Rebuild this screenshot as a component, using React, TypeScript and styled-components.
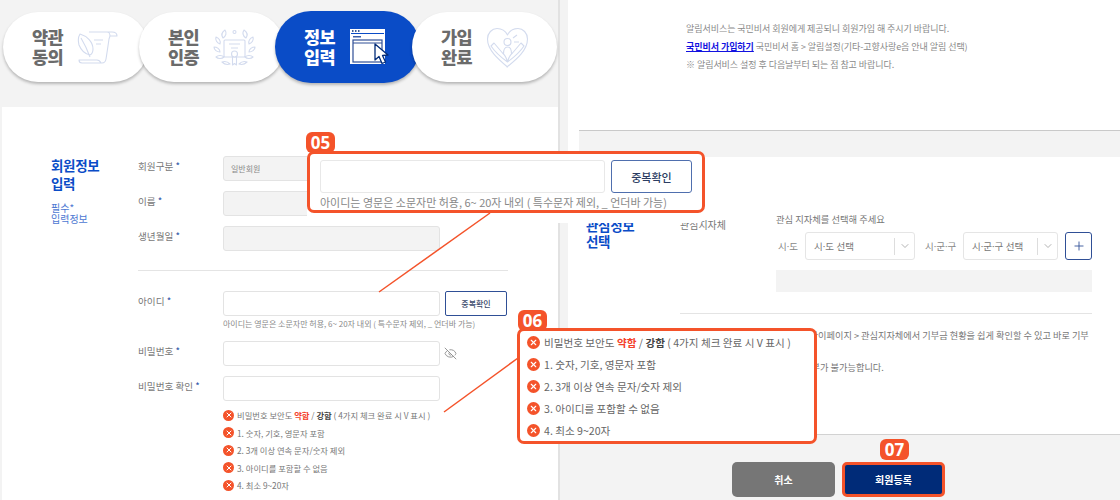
import styled, { createGlobalStyle } from "styled-components";
import { ChevronDown, EyeOff, Plus, X } from "lucide-react";

const GlobalStyle = createGlobalStyle`
  html, body {
    margin: 0;
    padding: 0;
    background: #f3f3f3;
  }
  * {
    box-sizing: border-box;
  }
  body {
    font-family: "Noto Sans CJK KR", "Noto Sans", sans-serif;
    color: #666;
  }
`;

const orange = "#f4532a";
const blue = "#0a4cc7";
const navy = "#002b78";
const iconLine = "#d3dbee";

const Page = styled.div`
  position: relative;
  display: flex;
  width: 1120px;
  height: 500px;
  overflow: hidden;
  background: #f3f3f3;
`;

const LeftShot = styled.section`
  width: 560px;
  height: 500px;
  flex: none;
  border-right: 2px solid #e2e2e2;
  padding: 12px 0 0 3px;
`;

const RightShot = styled.section`
  flex: 1;
  height: 500px;
  padding-left: 8px;
  display: flex;
  flex-direction: column;
`;

const Sheet = styled.div`
  display: flex;
  flex-direction: column;
  height: 435px;
  flex: none;
  background: #fff;
`;

const Steps = styled.div`
  display: flex;
  height: 70px;
  align-items: center;
`;

const Step = styled.div<{ $active?: boolean }>`
  display: flex;
  align-items: center;
  gap: 9px;
  flex: none;
  width: 145px;
  height: ${(p) => (p.$active ? "72px" : "70px")};
  margin-right: -9px;
  padding-left: 29px;
  border-radius: 36px;
  background: ${(p) => (p.$active ? blue : "#fff")};
  box-shadow: 0 2px 3px rgba(0, 0, 0, 0.25);
  color: ${(p) => (p.$active ? "#fff" : "#6b6b6b")};
  z-index: ${(p) => (p.$active ? 2 : 1)};

  &:last-child {
    z-index: 3;
    margin-left: 1px;
    margin-right: 0;
  }
`;

const StepText = styled.div`
  font-size: 17.5px;
  font-weight: 900;
  line-height: 20px;
  letter-spacing: -0.5px;
  width: 36px;
  flex: none;
`;

const FormPanel = styled.div`
  display: flex;
  height: 393px;
  margin: 25px 0 0 -1px;
  padding: 49px 0 0 49px;
  background: #fff;
`;

const SideTitle = styled.div`
  width: 87px;
  flex: none;
`;

const Heading = styled.h2`
  margin: 0;
  color: ${blue};
  font-size: 13.5px;
  font-weight: 700;
  line-height: 18px;
  letter-spacing: -0.3px;
`;

const SubHeading = styled.p`
  margin: 10px 0 0;
  color: #4d78d2;
  font-size: 10px;
  line-height: 11px;
`;

const FormBody = styled.div`
  width: 370px;
  display: flex;
  flex-direction: column;
`;

const Row = styled.div<{ $gap?: number }>`
  display: flex;
  margin-bottom: ${(p) => p.$gap ?? 10}px;
`;

const Label = styled.label`
  width: 85px;
  flex: none;
  padding-top: 2px;
  font-size: 9.6px;
  line-height: 16px;
  color: #777;

  b {
    color: #2f55a8;
    font-weight: 400;
  }
`;

const Input = styled.div<{ $disabled?: boolean }>`
  width: 217px;
  height: 25px;
  flex: none;
  padding-left: 7px;
  border: 1px solid #e3e3e3;
  border-radius: 3px;
  background: ${(p) => (p.$disabled ? "#f3f3f3" : "#fff")};
  font-size: 8px;
  line-height: 23px;
  color: #888;
`;

const SmallButton = styled.button`
  width: 62px;
  height: 25px;
  margin-left: 5px;
  padding: 0;
  border: 1px solid #2f4f96;
  border-radius: 2px;
  background: #fff;
  color: #3a4a6b;
  font-family: inherit;
  font-size: 8px;
  font-weight: 500;
`;

const Divider = styled.hr`
  width: 100%;
  height: 1px;
  margin: 9px 0 20px;
  border: 0;
  background: #e4e4e4;
`;

const Hint = styled.div`
  margin: -8px 0 11px 85px;
  font-size: 8px;
  line-height: 12px;
  color: #8a8a8a;
  white-space: nowrap;
`;

const EyeWrap = styled.span`
  display: flex;
  align-items: center;
  margin-left: 4px;
  color: #888;
`;

const CheckList = styled.ul`
  list-style: none;
  margin: 8px 0 0 85px;
  padding: 0;
  display: flex;
  flex-direction: column;
  gap: 5.5px;
`;

const CheckItem = styled.li`
  display: flex;
  align-items: center;
  gap: 3px;
  height: 12px;
  font-size: 8.3px;
  color: #777;
  white-space: nowrap;
`;

const FailDot = styled.span<{ $size: number }>`
  display: inline-flex;
  align-items: center;
  justify-content: center;
  width: ${(p) => p.$size}px;
  height: ${(p) => p.$size}px;
  flex: none;
  border-radius: 50%;
  background: ${orange};
  color: #fff;
`;

const Weak = styled.b`
  color: #f4402a;
  font-weight: 700;
`;

const Strong = styled.b`
  color: #444;
  font-weight: 700;
`;

const NoticePanel = styled.div`
  height: 131px;
  flex: none;
  margin-left: 11px;
  padding: 20px 0 0 107px;
  border-bottom: 1px solid #c9c9c9;
  font-size: 9px;
  line-height: 18px;
  letter-spacing: -0.05px;
  color: #8a8a8a;
  white-space: nowrap;
`;

const GrayBand = styled.div`
  height: 26px;
  flex: none;
  margin-left: 11px;
  background: #f3f3f3;
`;

const JoinLink = styled.a`
  color: #1212e0;
  font-weight: 700;
  text-decoration: underline;
`;

const RegionPanel = styled.div`
  display: flex;
  flex: 1;
  margin-left: 11px;
  padding: 60px 28px 0 7px;
  border-bottom: 1px solid #d2d2d2;
`;

const RegionTitle = styled(Heading)`
  width: 94px;
  flex: none;
  line-height: 16px;
`;

const RegionBody = styled.div`
  flex: 1;
  min-width: 0;
`;

const RegionTop = styled.div`
  display: flex;
  padding-bottom: 21px;
  border-bottom: 1px solid #e4e4e4;
`;

const RegionLabel = styled.div`
  width: 96px;
  flex: none;
  padding-top: 1px;
  font-size: 10px;
  line-height: 14px;
  color: #777;
`;

const RegionFields = styled.div`
  width: 316px;
  margin-top: -4px;
`;

const RegionHelp = styled.div`
  font-size: 9.3px;
  line-height: 12px;
  color: #777;
`;

const SelectRow = styled.div`
  display: flex;
  align-items: center;
  margin-top: 7px;
  font-family: "Noto Sans", "Noto Sans CJK KR", sans-serif;
  font-size: 9.5px;
  color: #888;
`;

const SelectCaption = styled.span<{ $width: number }>`
  width: ${(p) => p.$width}px;
  flex: none;
  padding-left: 2px;
`;

const SelectBox = styled.div<{ $width: number }>`
  display: flex;
  align-items: center;
  width: ${(p) => p.$width}px;
  height: 28px;
  flex: none;
  padding-left: 8px;
  margin-right: 8px;
  border: 1px solid #e5e5e5;
  border-radius: 3px;
  background: #fff;
  color: #777;
`;

const SelectValue = styled.span`
  flex: 1;
`;

const SelectArrow = styled.span`
  display: flex;
  align-items: center;
  justify-content: center;
  width: 20px;
  height: 17px;
  border-left: 1px solid #ddd;
  color: #999;
`;

const PlusButton = styled.div`
  display: flex;
  align-items: center;
  justify-content: center;
  width: 27px;
  height: 28px;
  margin-left: -1px;
  border: 1px solid #2f4f96;
  border-radius: 3px;
  color: #2f4f96;
`;

const EmptyBar = styled.div`
  height: 22px;
  margin-top: 10px;
  background: #f3f3f3;
`;

const RegionNote = styled.p`
  margin: 5px 0 0;
  padding-left: 3px;
  font-size: 9.2px;
  line-height: 32px;
  color: #777;
  white-space: nowrap;
`;

const Buttons = styled.div`
  display: flex;
  gap: 7px;
  margin: 27px 0 0 164px;
`;

const ActionButton = styled.button<{ $primary?: boolean }>`
  width: 103px;
  height: 35px;
  padding: 0;
  border: ${(p) => (p.$primary ? `3px solid ${orange}` : "0")};
  border-radius: 5px;
  background: ${(p) => (p.$primary ? navy : "#767676")};
  color: #fff;
  font-family: inherit;
  font-size: 10px;
  font-weight: 700;
`;

/* callouts lie over the two screens */
const Callout = styled.div<{ $x: number; $y: number; $w: number; $h: number; $mask?: boolean }>`
  position: absolute;
  left: ${(p) => p.$x}px;
  top: ${(p) => p.$y}px;
  width: ${(p) => p.$w}px;
  height: ${(p) => p.$h}px;
  border: 3px solid ${orange};
  border-radius: 7px;
  background: #fff;
  box-shadow: ${(p) => (p.$mask ? "0 10px 0 #fff" : "none")};
  z-index: 5;
`;

const Badge = styled.div<{ $x: number; $y: number }>`
  position: absolute;
  left: ${(p) => p.$x}px;
  top: ${(p) => p.$y}px;
  width: 29px;
  height: 21px;
  border-radius: 6px;
  background: ${orange};
  color: #fff;
  font-family: "Open Sans", "Noto Sans", sans-serif;
  font-size: 17px;
  font-weight: 700;
  line-height: 21px;
  text-align: center;
  z-index: 7;
`;

const Leaders = styled.svg`
  position: absolute;
  left: 0;
  top: 0;
  z-index: 6;
  pointer-events: none;
`;

const IdCalloutBody = styled.div`
  padding: 6px 10px 0 10px;
`;

const IdRow = styled.div`
  display: flex;
  gap: 6px;
`;

const BigInput = styled.div`
  width: 285px;
  height: 33px;
  border: 1px solid #e8e8e8;
  border-radius: 3px;
`;

const BigButton = styled.button`
  width: 81px;
  height: 33px;
  padding: 0;
  border: 1px solid #4f6fae;
  border-radius: 3px;
  background: #fff;
  color: #2c3d63;
  font-family: inherit;
  font-size: 11px;
  font-weight: 500;
`;

const BigHint = styled.div`
  margin-top: 2px;
  font-size: 11px;
  line-height: 14px;
  color: #888;
  white-space: nowrap;
`;

const PasswordList = styled.ul`
  list-style: none;
  margin: 0;
  padding: 0 0 0 7px;
  display: flex;
  flex-direction: column;
`;

const PasswordItem = styled.li`
  display: flex;
  align-items: center;
  gap: 4px;
  height: 22px;
  font-size: 10.6px;
  color: #666;
  white-space: nowrap;
`;

const passwordRules = [
  "1. 숫자, 기호, 영문자 포함",
  "2. 3개 이상 연속 문자/숫자 제외",
  "3. 아이디를 포함할 수 없음",
  "4. 최소 9~20자",
];

function ScrollIcon() {
  return (
    <svg width="41" height="34" viewBox="0 0 41 34" fill="none" stroke={iconLine} strokeWidth="1.1" strokeLinejoin="round">
      <path d="M12 2h23c3 0 5 1 5 4h-7c0-2-1-4-3-4M33 6l-1 3c-1 7-2 14-3 20-.5 3-2 4-4 4H5c-2 0-3-1-3-3h18c2 0 3 1 4 3" />
      <path d="M17 10h9M19 14h5" />
      <path d="M3 4c7 2 13 8 13 15 0 3-1 5-3 6-5-1-9-5-11-10-1-4-1-8 1-11z" />
      <path d="M4 8c3 5 6 11 9 19" />
    </svg>
  );
}

function LaurelIcon() {
  return (
    <svg width="43" height="37" viewBox="0 0 43 37" fill="none" stroke={iconLine} strokeWidth="1.1" strokeLinejoin="round">
      <path d="M12 1c2 3 1 6-2 8-2-3-1-6 2-8zM31 1c-2 3-1 6 2 8 2-3 1-6-2-8z" />
      <path d="M3 8c3 1 5 4 4 7-3-1-5-4-4-7zM40 8c-3 1-5 4-4 7 3-1 5-4 4-7z" />
      <path d="M1 18c3 0 6 2 6 5-3 0-6-2-6-5zM42 18c-3 0-6 2-6 5 3 0 6-2 6-5z" />
      <path d="M3 28c2-2 6-2 8 0-2 2-6 2-8 0zM40 28c-2-2-6-2-8 0 2 2 6 2 8 0z" />
      <path d="M9 33c3-1 6 0 8 2-3 1-6 0-8-2zM34 33c-3-1-6 0-8 2 3 1 6 0 8-2z" />
      <rect x="11" y="11" width="21" height="17" rx="1" />
      <path d="M16 15h11M18 19h7" />
      <circle cx="21.500" cy="25" r="3" fill="#fff" />
      <path d="M19.500 28v8l2-1.500 2 1.500v-8" />
      <circle cx="21.500" cy="3" r="1.500" />
    </svg>
  );
}

function WindowIcon() {
  return (
    <svg width="41" height="38" viewBox="0 0 41 38" fill="none">
      <rect x="1" y="1" width="35" height="35" fill="#fff" />
      <path d="M3 3h1.500M6 3h1.500M9 3h1.500" stroke={navy} strokeWidth="1.500" />
      <rect x="2" y="5" width="33" height="1" fill={blue} />
      <rect x="4" y="8" width="8" height="1.500" fill="#3a5da8" />
      <rect x="4" y="12" width="29" height="22" stroke="#2f4f96" strokeWidth="1.200" />
      <path d="M4 15h29" stroke="#2f4f96" strokeWidth="1" />
      <path d="M26 16v16l4-3.500 3 7 3.500-1.500-3-6.500 5.500-.5z" fill="#fff" stroke={navy} strokeWidth="1.300" strokeLinejoin="round" />
    </svg>
  );
}

function HeartIcon() {
  return (
    <svg width="43" height="41" viewBox="0 0 43 41" fill="none" stroke={iconLine} strokeWidth="1.1" strokeLinejoin="round">
      <path d="M21.500 40C12 32 1.500 23 1.500 12 1.500 6 6 1.500 11 1.500c4.500 0 8.500 2.500 10.500 6.500 2-4 6-6.500 10.500-6.500 5 0 9.500 4.500 9.500 10.500 0 11-10.500 20-20.500 28z" />
      <path d="M21.500 35c-1-4-2.500-7-5-9L8 16l-3 3c4 6 11 12 16.500 16zM21.500 35c1-4 2.500-7 5-9L35 16l3 3c-4 6-11 12-16.500 16z" />
      <circle cx="21.500" cy="15" r="3.500" />
      <path d="M17.500 27c0-4 1-7 4-7s4 3 4 7M27 11l4-3M28 15h5" />
    </svg>
  );
}

export default function App() {
  return (
    <Page>
      <GlobalStyle />
      <LeftShot>
        <Steps>
          <Step>
            <StepText>약관 동의</StepText>
            <ScrollIcon />
          </Step>
          <Step>
            <StepText>본인 인증</StepText>
            <LaurelIcon />
          </Step>
          <Step $active>
            <StepText>정보 입력</StepText>
            <WindowIcon />
          </Step>
          <Step>
            <StepText>가입 완료</StepText>
            <HeartIcon />
          </Step>
        </Steps>

        <FormPanel>
          <SideTitle>
            <Heading>
              회원정보
              <br />
              입력
            </Heading>
            <SubHeading>
              필수*
              <br />
              입력정보
            </SubHeading>
          </SideTitle>
          <FormBody>
            <Row>
              <Label>
                회원구분 <b>*</b>
              </Label>
              <Input $disabled>일반회원</Input>
            </Row>
            <Row>
              <Label>
                이름 <b>*</b>
              </Label>
              <Input $disabled />
            </Row>
            <Row>
              <Label>
                생년월일 <b>*</b>
              </Label>
              <Input $disabled />
            </Row>
            <Divider />
            <Row>
              <Label>
                아이디 <b>*</b>
              </Label>
              <Input />
              <SmallButton>중복확인</SmallButton>
            </Row>
            <Hint>아이디는 영문은 소문자만 허용, 6~ 20자 내외 ( 특수문자 제외, _ 언더바 가능)</Hint>
            <Row>
              <Label>
                비밀번호 <b>*</b>
              </Label>
              <Input />
              <EyeWrap>
                <EyeOff size={13} strokeWidth={1.6} />
              </EyeWrap>
            </Row>
            <Row $gap={0}>
              <Label>
                비밀번호 확인 <b>*</b>
              </Label>
              <Input />
            </Row>
            <CheckList>
              <CheckItem>
                <FailDot $size={11}>
                  <X size={8} strokeWidth={3} />
                </FailDot>
                <span>
                  비밀번호 보안도 <Weak>약함</Weak> / <Strong>강함</Strong> ( 4가지 체크 완료 시 V 표시 )
                </span>
              </CheckItem>
              {passwordRules.map((rule) => (
                <CheckItem key={rule}>
                  <FailDot $size={11}>
                    <X size={8} strokeWidth={3} />
                  </FailDot>
                  {rule}
                </CheckItem>
              ))}
            </CheckList>
          </FormBody>
        </FormPanel>
      </LeftShot>

      <RightShot>
        <Sheet>
          <NoticePanel>
            알림서비스는 국민비서 회원에게 제공되니 회원가입 해 주시기 바랍니다.
            <br />
            <JoinLink>국민비서 가입하기</JoinLink> 국민비서 홈 &gt; 알림설정(기타-고향사랑e음 안내 알림 선택)
            <br />※ 알림서비스 설정 후 다음날부터 되는 점 참고 바랍니다.
          </NoticePanel>
          <GrayBand />
          <RegionPanel>
            <RegionTitle>
              관심정보
              <br />
              선택
            </RegionTitle>
            <RegionBody>
              <RegionTop>
                <RegionLabel>관심지자체</RegionLabel>
                <RegionFields>
                  <RegionHelp>관심 지자체를 선택해 주세요</RegionHelp>
                  <SelectRow>
                    <SelectCaption $width={29}>시·도</SelectCaption>
                    <SelectBox $width={110}>
                      <SelectValue>시·도 선택</SelectValue>
                      <SelectArrow>
                        <ChevronDown size={12} strokeWidth={1.5} />
                      </SelectArrow>
                    </SelectBox>
                    <SelectCaption $width={40}>시·군·구</SelectCaption>
                    <SelectBox $width={95}>
                      <SelectValue>시·군·구 선택</SelectValue>
                      <SelectArrow>
                        <ChevronDown size={12} strokeWidth={1.5} />
                      </SelectArrow>
                    </SelectBox>
                    <PlusButton>
                      <Plus size={14} strokeWidth={1.5} />
                    </PlusButton>
                  </SelectRow>
                  <EmptyBar />
                </RegionFields>
              </RegionTop>
              <RegionNote>
                관심지자체로 등록해 주시면 나의 마이페이지 &gt; 관심지자체에서 기부금 현황을 쉽게 확인할 수 있고 바로 기부
                <br />
                관심지자체 미선택 시 해당 지역 기부가 불가능합니다.
              </RegionNote>
            </RegionBody>
          </RegionPanel>
        </Sheet>

        <Buttons>
          <ActionButton>취소</ActionButton>
          <ActionButton $primary>회원등록</ActionButton>
        </Buttons>
      </RightShot>

      <Leaders width="1120" height="500">
        <line x1="490" y1="213" x2="379" y2="292" stroke={orange} strokeWidth="1.5" />
        <line x1="518" y1="358" x2="444" y2="412" stroke={orange} strokeWidth="1.5" />
      </Leaders>

      <Callout $x={307} $y={151} $w={398} $h={62} $mask>
        <IdCalloutBody>
          <IdRow>
            <BigInput />
            <BigButton>중복확인</BigButton>
          </IdRow>
          <BigHint>아이디는 영문은 소문자만 허용, 6~ 20자 내외 ( 특수문자 제외, _ 언더바 가능)</BigHint>
        </IdCalloutBody>
      </Callout>
      <Badge $x={306} $y={132}>05</Badge>

      <Callout $x={517} $y={328} $w={300} $h={116}>
        <PasswordList>
          <PasswordItem>
            <FailDot $size={13}>
              <X size={9} strokeWidth={3} />
            </FailDot>
            <span>
              비밀번호 보안도 <Weak>약함</Weak> / <Strong>강함</Strong> ( 4가지 체크 완료 시 V 표시 )
            </span>
          </PasswordItem>
          {passwordRules.map((rule) => (
            <PasswordItem key={rule}>
              <FailDot $size={13}>
                <X size={9} strokeWidth={3} />
              </FailDot>
              {rule}
            </PasswordItem>
          ))}
        </PasswordList>
      </Callout>
      <Badge $x={518} $y={310}>06</Badge>
      <Badge $x={880} $y={439}>07</Badge>
    </Page>
  );
}
